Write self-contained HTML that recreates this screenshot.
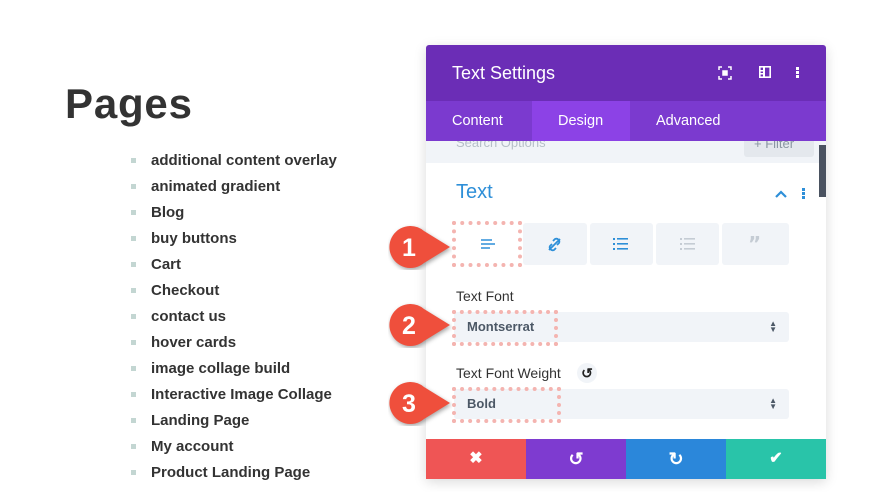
<!DOCTYPE html>
<html><head><style>
*{margin:0;padding:0;box-sizing:border-box}
body{width:880px;height:492px;background:#fff;font-family:"Liberation Sans",sans-serif;position:relative;overflow:hidden}
.a{position:absolute}
h1{position:absolute;left:65px;top:80px;font-size:42px;font-weight:bold;color:#333;letter-spacing:0.8px}
ul{position:absolute;left:131px;top:150px;list-style:none}
li{height:26px;font-size:15px;font-weight:bold;color:#333;position:relative;padding-left:20px;line-height:22px}
li:before{content:"";position:absolute;left:0;top:8px;width:5px;height:5px;background:#c3d6d2}
.btn{position:absolute;top:223px;height:42px;background:#f1f4f8;border-radius:3px}
.sel{position:absolute;left:454px;width:335px;height:30px;background:#f1f4f8;border-radius:3px;font-size:13px;font-weight:bold;color:#4c5866;padding-left:13px;line-height:30px}
.lbl{position:absolute;left:456px;font-size:14px;color:#333}
.dash{position:absolute;border:4px dotted #f4b4b0}
.mk{position:absolute;left:388px}
</style></head><body>
<h1>Pages</h1>
<ul>
<li>additional content overlay</li><li>animated gradient</li><li>Blog</li><li>buy buttons</li><li>Cart</li><li>Checkout</li><li>contact us</li><li>hover cards</li><li>image collage build</li><li>Interactive Image Collage</li><li>Landing Page</li><li>My account</li><li>Product Landing Page</li>
</ul>
<div class="a" style="left:426px;top:45px;width:400px;height:434px;background:#fff;box-shadow:0 3px 12px rgba(0,0,0,.15);border-radius:3px;overflow:hidden">
<div class="a" style="left:0;top:96px;width:400px;height:22px;background:#f1f4f8"></div>
<div class="a" style="left:30px;top:90px;color:#b6bfc8;font-size:13px">Search Options</div>
<div class="a" style="left:318px;top:85px;width:70px;height:27px;background:#e4e8ed;border-radius:3px;color:#8a96a2;font-size:13px;padding:6px 0 0 10px">+ Filter</div>
<div class="a" style="left:0;top:0;width:400px;height:56px;background:#6b2db6"></div>
<div class="a" style="left:26px;top:18px;color:#fff;font-size:18px">Text Settings</div>
<svg class="a" style="left:292px;top:21px" width="14" height="14" viewBox="0 0 14 14" fill="none" stroke="#fff" stroke-width="1.5"><path d="M1 4V1h3M10 1h3v3M13 10v3h-3M4 13H1v-3"/><rect x="5" y="5" width="4" height="4" fill="#fff"/></svg>
<svg class="a" style="left:333px;top:21px" width="12" height="12" viewBox="0 0 12 12"><rect x="0.8" y="0.8" width="10.4" height="10.4" fill="none" stroke="#fff" stroke-width="1.6"/><rect x="4" y="1" width="2" height="10" fill="#fff"/><rect x="1" y="4" width="3" height="1.5" fill="#fff"/><rect x="1" y="7" width="3" height="1.5" fill="#fff"/></svg>
<div class="a" style="left:370px;top:22px;width:3px;height:3px;background:#fff;box-shadow:0 4px #fff,0 8px #fff"></div>
<div class="a" style="left:0;top:56px;width:400px;height:40px;background:#7b3acf"></div>
<div class="a" style="left:106px;top:56px;width:98px;height:40px;background:#8c42e6"></div>
<div class="a" style="left:26px;top:68px;color:#fff;font-size:14.5px">Content</div>
<div class="a" style="left:132px;top:68px;color:#fff;font-size:14.5px">Design</div>
<div class="a" style="left:230px;top:68px;color:#fff;font-size:14.5px">Advanced</div>
<div class="a" style="left:393px;top:100px;width:7px;height:52px;background:#4a5260"></div>
<div class="a" style="left:30px;top:136px;color:#2e8fd8;font-size:20px">Text</div>
<svg class="a" style="left:348px;top:145px" width="14" height="9" viewBox="0 0 14 9"><path d="M2 7l5-5 5 5" fill="none" stroke="#2e8fd8" stroke-width="2.2"/></svg>
<div class="a" style="left:376px;top:143px;width:3px;height:3px;background:#2e8fd8;box-shadow:0 4px #2e8fd8,0 8px #2e8fd8"></div>
</div>
<div class="btn" style="left:454px;width:66px;background:#fff"></div>
<div class="btn" style="left:523px;width:64px"></div>
<div class="btn" style="left:590px;width:63px"></div>
<div class="btn" style="left:656px;width:63px"></div>
<div class="btn" style="left:722px;width:67px"></div>
<svg class="a" style="left:481px;top:239px" width="14" height="11"><path d="M0 1h11M0 5h14M0 9h9" stroke="#2e8fd8" stroke-width="1.6"/></svg>
<svg class="a" style="left:547px;top:237px" width="15" height="15" viewBox="0 0 15 15" fill="none" stroke="#2e8fd8" stroke-width="1.8"><path d="M6 4l2-2a3 3 0 0 1 4 4l-2 2M9 11l-2 2a3 3 0 0 1-4-4l2-2M2 13L13 2"/></svg>
<svg class="a" style="left:613px;top:238px" width="15" height="12"><g fill="#2e8fd8"><rect x="0" y="0" width="2" height="2"/><rect x="0" y="5" width="2" height="2"/><rect x="0" y="10" width="2" height="2"/><rect x="4" y="0" width="11" height="1.6"/><rect x="4" y="5" width="11" height="1.6"/><rect x="4" y="10" width="11" height="1.6"/></g></svg>
<svg class="a" style="left:680px;top:238px" width="15" height="12"><g fill="#c5ccd4"><rect x="0" y="0" width="2" height="2"/><rect x="0" y="5" width="2" height="2"/><rect x="0" y="10" width="2" height="2"/><rect x="4" y="0" width="11" height="1.6"/><rect x="4" y="5" width="11" height="1.6"/><rect x="4" y="10" width="11" height="1.6"/></g></svg>
<div class="a" style="left:748px;top:232px;font-size:20px;font-weight:bold;color:#c5ccd4;font-family:'DejaVu Sans',sans-serif">”</div>
<div class="lbl" style="top:288px">Text Font</div>
<div class="sel" style="top:312px">Montserrat<span style="position:absolute;right:12px;font-size:8px;color:#4c5866;line-height:6px;top:9px">▲<br>▼</span></div>
<div class="lbl" style="top:365px">Text Font Weight</div>
<div class="a" style="left:577px;top:363px;width:20px;height:20px;border-radius:50%;background:#f1f4f8;text-align:center;font-size:14px;font-weight:bold;line-height:20px;color:#222">↺</div>
<div class="sel" style="top:389px">Bold<span style="position:absolute;right:12px;font-size:8px;color:#4c5866;line-height:6px;top:9px">▲<br>▼</span></div>
<div class="a" style="left:426px;top:439px;width:100px;height:40px;background:#ef5555;color:#fff;text-align:center;line-height:40px;font-size:16px;font-weight:bold">✖</div>
<div class="a" style="left:526px;top:439px;width:100px;height:40px;background:#7e3bd0;color:#fff;text-align:center;line-height:40px;font-size:18px;font-weight:bold">↺</div>
<div class="a" style="left:626px;top:439px;width:100px;height:40px;background:#2b87da;color:#fff;text-align:center;line-height:40px;font-size:18px;font-weight:bold">↻</div>
<div class="a" style="left:726px;top:439px;width:100px;height:40px;background:#29c4a9;color:#fff;text-align:center;line-height:40px;font-size:16px;font-weight:bold">✔</div>
<div class="dash" style="left:452px;top:221px;width:70px;height:46px"></div>
<div class="dash" style="left:452px;top:310px;width:106px;height:36px"></div>
<div class="dash" style="left:452px;top:387px;width:109px;height:36px"></div>
<svg class="mk" style="top:224px" width="64" height="46"><path d="M22 2a21 21 0 1 0 14 37l26-16-26-16A21 21 0 0 0 22 2z" fill="#ef4f3c" filter="drop-shadow(1px 2px 2px rgba(0,0,0,.35))"/><text x="21" y="32" fill="#fff" font-size="25" font-weight="bold" font-family="Liberation Sans" text-anchor="middle">1</text></svg>
<svg class="mk" style="top:302px" width="64" height="46"><path d="M22 2a21 21 0 1 0 14 37l26-16-26-16A21 21 0 0 0 22 2z" fill="#ef4f3c" filter="drop-shadow(1px 2px 2px rgba(0,0,0,.35))"/><text x="21" y="32" fill="#fff" font-size="25" font-weight="bold" font-family="Liberation Sans" text-anchor="middle">2</text></svg>
<svg class="mk" style="top:380px" width="64" height="46"><path d="M22 2a21 21 0 1 0 14 37l26-16-26-16A21 21 0 0 0 22 2z" fill="#ef4f3c" filter="drop-shadow(1px 2px 2px rgba(0,0,0,.35))"/><text x="21" y="32" fill="#fff" font-size="25" font-weight="bold" font-family="Liberation Sans" text-anchor="middle">3</text></svg>
</body></html>
